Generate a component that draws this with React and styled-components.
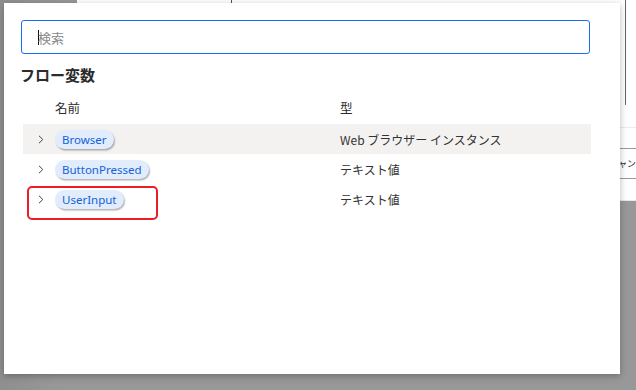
import styled, { createGlobalStyle } from "styled-components";

const Global = createGlobalStyle`
    html, body { margin: 0; padding: 0; }
    body {
        background: #989898;
        font-family: "Noto Sans CJK JP", "Noto Sans", sans-serif;
    }
`

const Screen = styled.div`
    position: relative;
    width: 636px; height: 390px; overflow: hidden;
    background: linear-gradient(90deg, #8f8f8f 0px, #989898 60px);
`

// window behind the dialog (only its edges show)
const BackWindow = styled.div`
    position: absolute; left: 77px; top: 0; right: 0; height: 200px;
    background: #ffffff;
    border-bottom: 1px solid #e6e6e6;
`

const BackDivider = styled.div`
    position: absolute; left: 154px; top: 0; width: 1px; height: 4px;
    background: #555;
`

const BackBox = styled.div`
    position: absolute; left: 548px; top: -2px; width: 0; height: 106px;
    border-right: 1px solid #666;
    border-bottom: 1px solid #666;
    border-bottom-right-radius: 2px;
`

const BackLine = styled.div`
    position: absolute; left: 540px; right: 0; top: ${props => props.top}px;
    border-top: 1px solid ${props => props.color};
`

const BackButtonText = styled.div`
    position: absolute; left: 541px; top: 157px;
    font-size: 9px; color: #222; white-space: nowrap;
`

const Panel = styled.div`
    position: absolute; left: 4px; top: 3px;
    width: 616px; height: 371px;
    background: #ffffff;
    box-shadow: 0 2px 7px rgba(0,0,0,0.28);
    box-sizing: border-box;
    padding: 17px 0 0 16px;
    display: flex; flex-direction: column;
`

const SearchBox = styled.div`
    width: 569px; height: 34px; box-sizing: border-box;
    margin-left: 1px;
    border: 1px solid #1a6cf0; border-radius: 3px;
    display: flex; align-items: center;
    padding-left: 16px;
`

const Caret = styled.span`
    width: 1px; height: 15px; background: #111; margin-right: -1px;
`

const Placeholder = styled.span`
    font-size: 13px; color: #8a8a8a;
`

const Title = styled.div`
    margin-top: 11px;
    font-size: 15px; font-weight: 700; color: #2b2b2b;
    line-height: 20px;
`

const Table = styled.div`
    margin-top: 9px; margin-left: 3px;
    width: 568px;
    display: flex; flex-direction: column;
`

const HeaderRow = styled.div`
    display: grid; grid-template-columns: 32px 285px 1fr;
    height: 26px; align-items: center;
    font-size: 12.5px; color: #2b2b2b;
    padding-bottom: 4px;
`

const Row = styled.div`
    display: grid; grid-template-columns: 32px 285px 1fr;
    height: 30px; align-items: center;
    background: ${props => props.shaded ? '#f3f2f1' : 'transparent'};
    font-size: 12px; color: #333;
`

const Chevron = styled.svg`
    margin-left: 15px;
    width: 6px; height: 9px;
`

const Pill = styled.span`
    justify-self: start;
    height: 19px; line-height: 19px;
    padding: 0 7px;
    border-radius: 10px;
    background: #e1ecfd;
    color: #1461d9;
    font-family: "Noto Sans", "Noto Sans CJK JP", sans-serif;
    font-size: 11.5px;
    box-shadow: 1px 1.5px 1.5px rgba(0,0,0,0.3);
`

const Highlight = styled.div`
    position: absolute; left: 23px; top: 183px;
    width: 131px; height: 34px; box-sizing: border-box;
    border: 2px solid #ee1c25; border-radius: 5px;
`

const rows = [
    { name: 'Browser', type: 'Web ブラウザー インスタンス', shaded: true },
    { name: 'ButtonPressed', type: 'テキスト値' },
    { name: 'UserInput', type: 'テキスト値' },
]

function App() {
    return (
        <Screen>
            <Global />
            <BackWindow>
                <BackDivider />
                <BackBox />
                <BackLine top={127} color="#ececec" />
                <BackLine top={148} color="#9a9a9a" />
                <BackLine top={178} color="#9a9a9a" />
                <BackButtonText>ャン</BackButtonText>
            </BackWindow>
            <Panel>
                <SearchBox>
                    <Caret />
                    <Placeholder>検索</Placeholder>
                </SearchBox>
                <Title>フロー変数</Title>
                <Table>
                    <HeaderRow>
                        <span />
                        <span>名前</span>
                        <span>型</span>
                    </HeaderRow>
                    {rows.map(r => (
                        <Row key={r.name} shaded={r.shaded}>
                            <Chevron viewBox="0 0 6 9">
                                <path d="M1 0.8 L4.8 4.5 L1 8.2" fill="none" stroke="#444" strokeWidth="1" />
                            </Chevron>
                            <Pill>{r.name}</Pill>
                            <span>{r.type}</span>
                        </Row>
                    ))}
                </Table>
                <Highlight />
            </Panel>
        </Screen>
    )
}

export default App
